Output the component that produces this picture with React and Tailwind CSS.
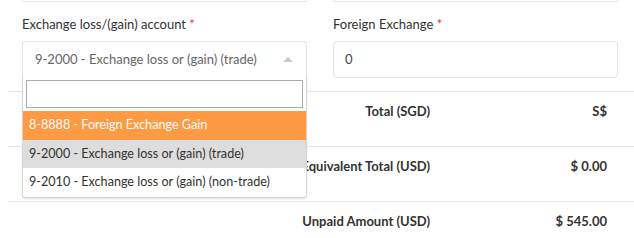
import React from 'react';

const font = { fontFamily: 'Lato, "Open Sans", sans-serif' };

const rows = [
  { label: 'Total (SGD)', value: 'S$' },
  { label: 'Equivalent Total (USD)', value: '$ 0.00' },
  { label: 'Unpaid Amount (USD)', value: '$ 545.00' },
];

const options = [
  { id: '8-8888', text: '8-8888 - Foreign Exchange Gain', state: 'highlight' },
  { id: '9-2000', text: '9-2000 - Exchange loss or (gain) (trade)', state: 'selected' },
  { id: '9-2010', text: '9-2010 - Exchange loss or (gain) (non-trade)', state: 'none' },
];

const App = () => {
  return (
    <div className="relative w-[634px] h-[238px] overflow-hidden bg-white text-[13px] text-[#333]" style={font}>
      {/* Bottoms of the previous row's inputs */}
      <div className="flex gap-[26px] pl-[22px] pr-[16px]">
        <div className="w-[285px] h-[2px] border-x border-b border-[#e2e2e2] rounded-b-[4px]" />
        <div className="w-[285px] h-[2px] border-x border-b border-[#e2e2e2] rounded-b-[4px]" />
      </div>

      {/* Form fields */}
      <div className="flex gap-[26px] pl-[22px] pr-[16px] pt-[14px]">
        <div className="w-[285px] flex flex-col">
          <label className="h-[17px] leading-[17px] mb-[8px]">
            Exchange loss/(gain) account <span className="text-[#e8315b]">*</span>
          </label>
          <div className="h-[37px] flex items-center justify-between border border-[#e2e2e2] rounded-t-[4px] border-b-transparent pl-[12px] pr-[13px] text-[#666]">
            <span>9-2000 - Exchange loss or (gain) (trade)</span>
            <span className="w-0 h-0 border-x-[5px] border-x-transparent border-b-[5px] border-b-[#c8c8c8]" />
          </div>
        </div>
        <div className="w-[285px] flex flex-col">
          <label className="h-[17px] leading-[17px] mb-[8px]">
            Foreign Exchange <span className="text-[#e8315b]">*</span>
          </label>
          <div className="h-[37px] flex items-center border border-[#e2e2e2] rounded-[4px] px-[11px] text-[#444]">
            0
          </div>
        </div>
      </div>

      {/* Totals */}
      <div className="mt-[13px] ml-[8px]">
        {rows.map((row) => (
          <div key={row.label} className="h-[55px] border-t border-[#e5e5e5] flex pt-[11px] font-bold text-[#333]">
            <div className="w-[422px] text-right leading-[16px]">{row.label}</div>
            <div className="w-[177px] text-right leading-[16px]">{row.value}</div>
          </div>
        ))}
      </div>

      {/* Open dropdown */}
      <div className="absolute left-[22px] top-[77px] w-[285px] bg-white border border-[#d6d6d6] border-t-0 rounded-b-[4px] shadow-[0_1px_2px_rgba(0,0,0,0.12)] pt-[3px] pb-[1px] text-[12.6px]">
        <div className="mx-[3px] h-[28px] border border-[#aaaaaa]" />
        <ul className="mt-[3px]">
          {options.map((o) => (
            <li
              key={o.id}
              className={
                o.state === 'highlight'
                  ? 'h-[29px] flex items-center pl-[6px] bg-[#fd9a43] text-white'
                  : o.state === 'selected'
                  ? 'h-[28px] flex items-center pl-[6px] bg-[#dddddd] text-[#333]'
                  : 'h-[28px] flex items-center pl-[6px] bg-white text-[#333]'
              }
            >
              {o.text}
            </li>
          ))}
        </ul>
      </div>
    </div>
  );
};

export default App;
